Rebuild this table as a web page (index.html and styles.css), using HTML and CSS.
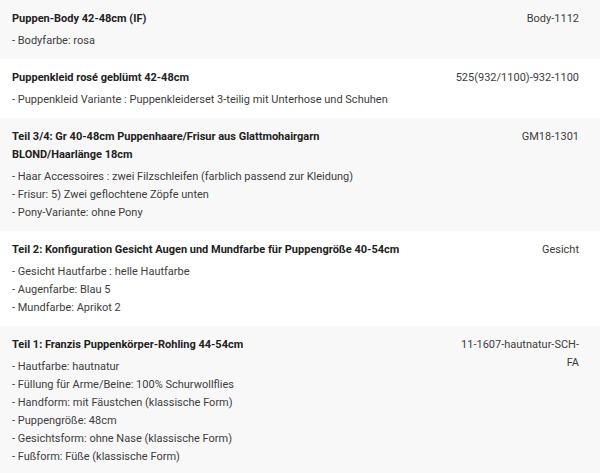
FILE: index.html
```html
<!DOCTYPE html>
<html lang="de">
<head>
<meta charset="utf-8">
<title>Positionen</title>
<link rel="stylesheet" href="styles.css">
</head>
<body>
<div class="items">
  <div class="row alt">
    <div class="desc">
      <div class="title">Puppen-Body 42-48cm (IF)</div>
      <div class="opts">
        <div>- Bodyfarbe: rosa</div>
      </div>
    </div>
    <div class="code">Body-1112</div>
  </div>
  <div class="row">
    <div class="desc">
      <div class="title">Puppenkleid rosé geblümt 42-48cm</div>
      <div class="opts">
        <div>- Puppenkleid Variante : Puppenkleiderset 3-teilig mit Unterhose und Schuhen</div>
      </div>
    </div>
    <div class="code">525(932/1100)-932-1100</div>
  </div>
  <div class="row alt">
    <div class="desc">
      <div class="title">Teil 3/4: Gr 40-48cm Puppenhaare/Frisur aus Glattmohairgarn BLOND/Haarlänge 18cm</div>
      <div class="opts">
        <div>- Haar Accessoires : zwei Filzschleifen (farblich passend zur Kleidung)</div>
        <div>- Frisur: 5) Zwei geflochtene Zöpfe unten</div>
        <div>- Pony-Variante: ohne Pony</div>
      </div>
    </div>
    <div class="code">GM18-1301</div>
  </div>
  <div class="row">
    <div class="desc">
      <div class="title">Teil 2: Konfiguration Gesicht Augen und Mundfarbe für Puppengröße 40-54cm</div>
      <div class="opts">
        <div>- Gesicht Hautfarbe : helle Hautfarbe</div>
        <div>- Augenfarbe: Blau 5</div>
        <div>- Mundfarbe: Aprikot 2</div>
      </div>
    </div>
    <div class="code">Gesicht</div>
  </div>
  <div class="row alt">
    <div class="desc">
      <div class="title">Teil 1: Franzis Puppenkörper-Rohling 44-54cm</div>
      <div class="opts">
        <div>- Hautfarbe: hautnatur</div>
        <div>- Füllung für Arme/Beine: 100% Schurwollflies</div>
        <div>- Handform: mit Fäustchen (klassische Form)</div>
        <div>- Puppengröße: 48cm</div>
        <div>- Gesichtsform: ohne Nase (klassische Form)</div>
        <div>- Fußform: Füße (klassische Form)</div>
      </div>
    </div>
    <div class="code">11-1607-hautnatur-SCH-FA</div>
  </div>
</div>
</body>
</html>
```

FILE: styles.css
```css
html, body {
  margin: 0;
  padding: 0;
  background: #ffffff;
}
body {
  font-family: Roboto, "Liberation Sans", Arial, sans-serif;
  font-size: 11px;
  line-height: 18px;
  color: #3d3d3d;
}
.items {
  display: flex;
  flex-direction: column;
}
.row {
  display: grid;
  grid-template-columns: 1fr 126px;
  column-gap: 50px;
  padding: 10px 21px 9px 12px;
  background: #ffffff;
}
.row.alt {
  background: #f8f8f8;
}
.title {
  font-weight: 700;
  color: #222222;
  margin-bottom: 4px;
}
.opts {
  display: flex;
  flex-direction: column;
}
.code {
  text-align: right;
  color: #3d3d3d;
}
```
